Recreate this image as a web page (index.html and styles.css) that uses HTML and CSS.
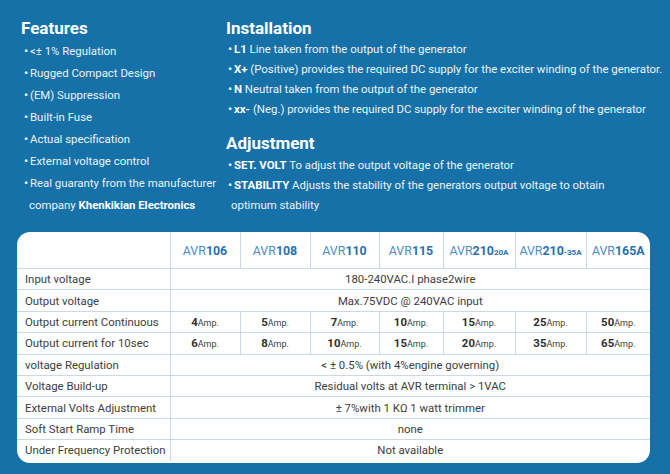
FILE: index.html
```html
<!DOCTYPE html>
<html>
<head>
<meta charset="utf-8">
<link rel="stylesheet" href="styles.css">
</head>
<body>
<div class="page">
  <div class="top">
    <section class="features">
      <h2>Features</h2>
      <ul class="flist">
        <li>&lt;± 1% Regulation</li>
        <li>Rugged Compact Design</li>
        <li>(EM) Suppression</li>
        <li>Built-in Fuse</li>
        <li>Actual specification</li>
        <li>External voltage control</li>
        <li>Real guaranty from the manufacturer<br><span class="cont">company <b>Khenkikian Electronics</b></span></li>
      </ul>
    </section>
    <section class="right">
      <h2>Installation</h2>
      <ul class="ilist">
        <li><b>L1</b> Line taken from the output of the generator</li>
        <li><b>X+</b> (Positive) provides the required DC supply for the exciter winding of the generator.</li>
        <li><b>N</b> Neutral taken from the output of the generator</li>
        <li><b>xx-</b> (Neg.) provides the required DC supply for the exciter winding of the generator</li>
      </ul>
      <h2 class="adj">Adjustment</h2>
      <ul class="ilist second">
        <li><b>SET. VOLT</b> To adjust the output voltage of the generator</li>
        <li><b>STABILITY</b> Adjusts the stability of the generators output voltage to obtain<br><span class="cont2">optimum stability</span></li>
      </ul>
    </section>
  </div>
  <div class="card">
    <table class="spec">
      <colgroup>
        <col class="c-label">
        <col class="c1"><col class="c2"><col class="c3"><col class="c4"><col class="c5"><col class="c6"><col class="c7">
      </colgroup>
      <thead>
        <tr class="head">
          <th></th>
          <th>AVR<b>106</b></th>
          <th>AVR<b>108</b></th>
          <th>AVR<b>110</b></th>
          <th>AVR<b>115</b></th>
          <th>AVR<b>210</b><b class="sm">20A</b></th>
          <th>AVR<b>210</b><b class="sm">-35A</b></th>
          <th>AVR<b>165A</b></th>
        </tr>
      </thead>
      <tbody>
        <tr><td class="lbl">Input voltage</td><td colspan="7" class="span">180-240VAC.I phase2wire</td></tr>
        <tr><td class="lbl">Output voltage</td><td colspan="7" class="span">Max.75VDC @ 240VAC input</td></tr>
        <tr class="amps"><td class="lbl">Output current Continuous</td>
          <td><b>4</b><span>Amp.</span></td><td><b>5</b><span>Amp.</span></td><td><b>7</b><span>Amp.</span></td><td><b>10</b><span>Amp.</span></td><td><b>15</b><span>Amp.</span></td><td><b>25</b><span>Amp.</span></td><td><b>50</b><span>Amp.</span></td></tr>
        <tr class="amps"><td class="lbl">Output current for 10sec</td>
          <td><b>6</b><span>Amp.</span></td><td><b>8</b><span>Amp.</span></td><td><b>10</b><span>Amp.</span></td><td><b>15</b><span>Amp.</span></td><td><b>20</b><span>Amp.</span></td><td><b>35</b><span>Amp.</span></td><td><b>65</b><span>Amp.</span></td></tr>
        <tr><td class="lbl">voltage Regulation</td><td colspan="7" class="span">&lt; ± 0.5% (with 4%engine governing)</td></tr>
        <tr><td class="lbl">Voltage Build-up</td><td colspan="7" class="span">Residual volts at AVR terminal &gt; 1VAC</td></tr>
        <tr><td class="lbl">External Volts Adjustment</td><td colspan="7" class="span">± 7%with 1 KΩ 1 watt trimmer</td></tr>
        <tr><td class="lbl">Soft Start Ramp Time</td><td colspan="7" class="span">none</td></tr>
        <tr><td class="lbl">Under Frequency Protection</td><td colspan="7" class="span">Not available</td></tr>
      </tbody>
    </table>
  </div>
</div>
</body>
</html>
```

FILE: styles.css
```css
html, body {
  margin: 0;
  padding: 0;
}
body {
  background: #1571a8;
  font-family: Roboto, "Noto Sans", sans-serif;
  color: #eef3f8;
  width: 670px;
  height: 474px;
  overflow: hidden;
}
.top {
  display: flex;
  height: 232px;
}
h2 {
  margin: 0;
  font-size: 17px;
  font-weight: 700;
  color: #ffffff;
  line-height: 20px;
}
b { font-weight: 700; color: #ffffff; }
ul {
  list-style: none;
  margin: 0;
  padding: 0;
}
.features {
  flex: none;
  width: 226px;
  padding-left: 21px;
  padding-top: 18px;
  box-sizing: border-box;
}
.flist {
  margin-top: 2px;
}
.flist li {
  font-size: 11.4px;
  line-height: 22px;
  white-space: nowrap;
}
.flist li::before,
.ilist li::before {
  content: "•";
  display: inline-block;
  width: 6px;
  margin-left: 3px;
  font-weight: 700;
}
.ilist li::before { margin-left: 2px; }
.cont { padding-left: 8px; }
.right {
  flex: 1;
  padding-top: 18px;
}
.ilist li {
  font-size: 11.4px;
  line-height: 20px;
  white-space: nowrap;
}
.ilist { margin-top: 1px; }
.adj { margin-top: 14px; }
.ilist.second { margin-top: 2px; }
.cont2 { padding-left: 5px; }

.card {
  margin-left: 17px;
  width: 633px;
  height: 231px;
  background: #ffffff;
  border-radius: 13px;
  overflow: hidden;
}
.spec {
  border-collapse: collapse;
  table-layout: fixed;
  width: 633px;
  color: #3d3d3d;
  font-size: 11.4px;
}
.c-label { width: 153px; }
.c1 { width: 70px; }
.c2 { width: 70px; }
.c3 { width: 69px; }
.c4 { width: 64px; }
.c5 { width: 72px; }
.c6 { width: 71px; }
.c7 { width: 64px; }
.spec th, .spec td {
  border: 1px solid #cdd7ea;
  padding: 0;
}
.spec tr:first-child th { border-top: none; }
.spec th:first-child, .spec td:first-child { border-left: none; }
.spec th:last-child, .spec td:last-child { border-right: none; }
.spec tbody tr:last-child td { border-bottom: none; }
.head th {
  height: 36px;
  font-weight: 400;
  font-size: 12.4px;
  color: #4f8bc6;
  white-space: nowrap;
  text-align: center;
}
.head th b { color: #2d6eae; }
.head th b.sm { font-size: 8px; }
.spec tbody td { height: 20.4px; }
.lbl {
  padding-left: 8px !important;
  white-space: nowrap;
}
.span { text-align: center; }
.amps td { text-align: center; }
.amps td.lbl { text-align: left; }
.amps b { color: #2f2f2f; font-size: 11.4px; }
.amps span { font-size: 9px; }
```
